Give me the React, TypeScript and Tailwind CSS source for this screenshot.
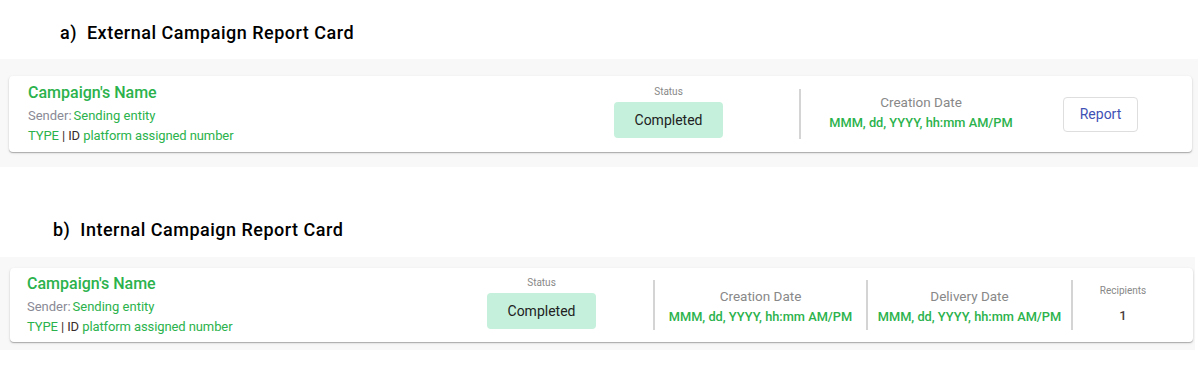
import React from "react";

const font = { fontFamily: "Roboto, 'Noto Sans', sans-serif" };

function NameBlock() {
  return (
    <div className="flex-1 flex flex-col">
      <div className="text-[16px] leading-[20px] font-medium text-[#2bb24c]">Campaign's Name</div>
      <div className="mt-[3px] text-[13px] leading-[19px]">
        <span className="text-[#8a8a96]">Sender:</span>
        <span className="ml-[2px] text-[#2bb24c]">Sending entity</span>
      </div>
      <div className="mt-[1px] text-[13px] leading-[19px] tracking-[-0.1px]">
        <span className="text-[#2bb24c]">TYPE</span>
        <span className="text-[#3a2c2c]"> | ID </span>
        <span className="text-[#2bb24c]">platform assigned number</span>
      </div>
    </div>
  );
}

function StatusBlock() {
  return (
    <div className="w-[109px] flex flex-col items-center -mt-[4px]">
      <div className="text-[10px] leading-[12px] text-[#888]">Status</div>
      <div className="mt-[4px] w-full h-[36px] rounded-[4px] bg-[#c4f0dc] flex items-center justify-center text-[14px] text-[#222]">
        Completed
      </div>
    </div>
  );
}

function DateBlock({ label, width, shift }: { label: string; width: string; shift: string }) {
  return (
    <div className={`${width} ${shift} flex flex-col items-center`}>
      <div className="text-[13.5px] leading-[16px] text-[#888]">{label}</div>
      <div className="mt-[5px] text-[12.8px] leading-[16px] font-medium text-[#2bb24c]">MMM, dd, YYYY, hh:mm AM/PM</div>
    </div>
  );
}

const Divider = () => <div className="w-[2px] h-[50px] bg-[#d4d4d4]" />;

const cardCls =
  "bg-white rounded-[4px] flex items-center shadow-[0_1px_1px_rgba(0,0,0,0.25),0_1px_3px_rgba(0,0,0,0.12)]";

export default function App() {
  return (
    <div className="w-[1200px] h-[371px] bg-white" style={font}>
      <div className="h-[59px] pl-[60px] pt-[21px]">
        <h2 className="text-[18px] leading-[24px] font-medium tracking-[0.5px] text-black">a)&nbsp;&nbsp;External Campaign Report Card</h2>
      </div>
      <div className="mr-[2px] h-[108px] bg-[#f8f8f8] pt-[17px] pl-[9px] pr-[6px]">
        <div className={`${cardCls} h-[76px] pl-[19px] pr-[54px]`}>
          <NameBlock />
          <StatusBlock />
          <div className="ml-[76px]"><Divider /></div>
          <DateBlock label="Creation Date" width="w-[240px]" shift="-mt-[3px]" />
          <button className="ml-[22px] w-[75px] h-[35px] rounded-[4px] border border-[#dedede] text-[14px] text-[#3f51b5] bg-white">
            Report
          </button>
        </div>
      </div>
      <div className="h-[90px] pl-[53px] pt-[51px]">
        <h2 className="text-[18px] leading-[24px] font-medium tracking-[0.5px] text-black">b)&nbsp;&nbsp;Internal Campaign Report Card</h2>
      </div>
      <div className="mr-[5px] h-[93px] bg-[#f8f8f8] pt-[11px] pl-[10px] pr-[2px]">
        <div className={`${cardCls} h-[74px] pl-[17px] pr-[20px]`}>
          <NameBlock />
          <StatusBlock />
          <div className="ml-[57px]"><Divider /></div>
          <DateBlock label="Creation Date" width="w-[211px]" shift="mt-[3px]" />
          <Divider />
          <DateBlock label="Delivery Date" width="w-[203px]" shift="mt-[3px]" />
          <Divider />
          <div className="w-[100px] flex flex-col items-center -mt-[1px]">
            <div className="text-[10px] leading-[12px] text-[#888]">Recipients</div>
            <div className="mt-[11px] text-[13px] leading-[16px] font-medium text-[#4a4040]">1</div>
          </div>
        </div>
      </div>
    </div>
  );
}
